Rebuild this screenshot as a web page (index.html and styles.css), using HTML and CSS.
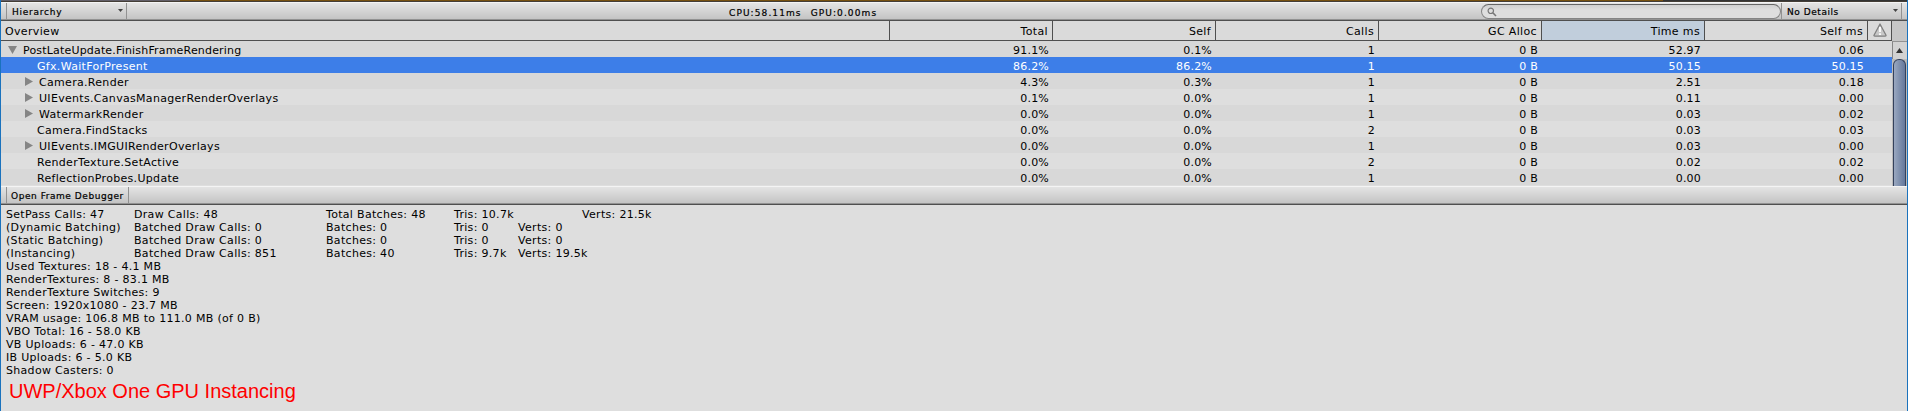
FILE: index.html
```html
<!DOCTYPE html>
<html lang="en">
<head>
  <meta charset="UTF-8" />
  <meta name="viewport" content="width=device-width, initial-scale=1" />
  <title>Profiler</title>
  <link rel="stylesheet" href="styles.css">
</head>
<body>
  <div class="top-strip"><span class="strip-a"></span><span class="strip-b"></span><span class="strip-c"></span></div>

  <!-- Toolbar -->
  <div class="toolbar">
    <div class="dropdown view-mode"><span>Hierarchy</span><i class="caret"></i></div>
    <div class="times"><span class="cpu">CPU:58.11ms</span><span class="gpu">GPU:0.00ms</span></div>
    <div class="search">
      <svg width="10" height="10" viewBox="0 0 10 10"><circle cx="3.8" cy="3.8" r="2.7" fill="none" stroke="#777" stroke-width="1.2"/><path d="M5.8 5.8L9 9" stroke="#777" stroke-width="1.6"/></svg>
    </div>
    <div class="dropdown details"><span>No Details</span><i class="caret"></i></div>
  </div>

  <!-- Call tree -->
  <div class="tree">
    <div class="table">
      <div class="row head">
        <span class="name">Overview</span><span>Total</span><span>Self</span><span>Calls</span><span>GC Alloc</span><span class="sorted">Time ms</span><span>Self ms</span>
        <span class="warn"><svg width="14" height="14" viewBox="0 0 14 14"><path d="M7 1L13 12.2Q13.2 13.2 12.2 13.2H1.8Q0.8 13.2 1 12.2Z" fill="#c8c8c8" stroke="#808080" stroke-width="1.3" stroke-linejoin="round"/><path d="M7 4V9M7 10.3V12" stroke="#fff" stroke-width="1.8"/></svg></span>
      </div>
      <div class="row"><span class="name root"><i class="open"></i>PostLateUpdate.FinishFrameRendering</span><span>91.1%</span><span>0.1%</span><span>1</span><span>0 B</span><span>52.97</span><span>0.06</span></div>
      <div class="row selected"><span class="name leaf">Gfx.WaitForPresent</span><span>86.2%</span><span>86.2%</span><span>1</span><span>0 B</span><span>50.15</span><span>50.15</span></div>
      <div class="row"><span class="name child"><i class="closed"></i>Camera.Render</span><span>4.3%</span><span>0.3%</span><span>1</span><span>0 B</span><span>2.51</span><span>0.18</span></div>
      <div class="row"><span class="name child"><i class="closed"></i>UIEvents.CanvasManagerRenderOverlays</span><span>0.1%</span><span>0.0%</span><span>1</span><span>0 B</span><span>0.11</span><span>0.00</span></div>
      <div class="row"><span class="name child"><i class="closed"></i>WatermarkRender</span><span>0.0%</span><span>0.0%</span><span>1</span><span>0 B</span><span>0.03</span><span>0.02</span></div>
      <div class="row"><span class="name leaf">Camera.FindStacks</span><span>0.0%</span><span>0.0%</span><span>2</span><span>0 B</span><span>0.03</span><span>0.03</span></div>
      <div class="row"><span class="name child"><i class="closed"></i>UIEvents.IMGUIRenderOverlays</span><span>0.0%</span><span>0.0%</span><span>1</span><span>0 B</span><span>0.03</span><span>0.00</span></div>
      <div class="row"><span class="name leaf">RenderTexture.SetActive</span><span>0.0%</span><span>0.0%</span><span>2</span><span>0 B</span><span>0.02</span><span>0.02</span></div>
      <div class="row"><span class="name leaf">ReflectionProbes.Update</span><span>0.0%</span><span>0.0%</span><span>1</span><span>0 B</span><span>0.00</span><span>0.00</span></div>
    </div>
    <div class="scroll">
      <div class="scroll-corner"></div>
      <div class="scroll-up"><i></i></div>
      <div class="thumb"></div>
    </div>
  </div>

  <div class="toolbar lower">
    <div class="button">Open Frame Debugger</div>
  </div>

  <!-- Rendering stats -->
  <div class="stats">
    <div class="stat totals"><span>SetPass Calls: 47</span><span>Draw Calls: 48</span><span>Total Batches: 48</span><span>Tris: 10.7k</span><span>Verts: 21.5k</span></div>
    <div class="stat"><span>(Dynamic Batching)</span><span>Batched Draw Calls: 0</span><span>Batches: 0</span><span>Tris: 0</span><span>Verts: 0</span></div>
    <div class="stat"><span>(Static Batching)</span><span>Batched Draw Calls: 0</span><span>Batches: 0</span><span>Tris: 0</span><span>Verts: 0</span></div>
    <div class="stat"><span>(Instancing)</span><span>Batched Draw Calls: 851</span><span>Batches: 40</span><span>Tris: 9.7k</span><span>Verts: 19.5k</span></div>
    <div>Used Textures: 18 - 4.1 MB</div>
    <div>RenderTextures: 8 - 83.1 MB</div>
    <div>RenderTexture Switches: 9</div>
    <div>Screen: 1920x1080 - 23.7 MB</div>
    <div>VRAM usage: 106.8 MB to 111.0 MB (of 0 B)</div>
    <div>VBO Total: 16 - 58.0 KB</div>
    <div>VB Uploads: 6 - 47.0 KB</div>
    <div>IB Uploads: 6 - 5.0 KB</div>
    <div>Shadow Casters: 0</div>
  </div>
  <div class="caption">UWP/Xbox One GPU Instancing</div>
</body>
</html>
```

FILE: styles.css
```css
* {
  box-sizing: border-box;
}
body {
  margin: 0;
  height: 411px;
  overflow: hidden;
  background: #dedede;
  border-left: 1px solid #1a72bd;
  border-right: 1px solid #1a72bd;
  font-family: "DejaVu Sans", Verdana, sans-serif;
  font-size: 11px;
  letter-spacing: 0.31px;
  color: #000;
}
.top-strip {
  display: flex;
  height: 2px;
  border-bottom: 1px solid #433d36;
}
.strip-a {
  width: 179px;
  background: #625f68;
}
.strip-b {
  flex: 1;
  background: #76500f;
}
.strip-c {
  width: 244px;
  background: #333;
}

/* Toolbars */
.toolbar {
  display: flex;
  height: 19px;
  padding: 0 5px;
  background: linear-gradient(#e4e4e4, #c2c2c2);
  border-top: 1px solid #f4f4f4;
  border-bottom: 1px solid #4f4f4f;
  box-shadow: inset 0 -1px #929292;
  font-size: 9px;
  line-height: 18px;
  letter-spacing: 0.55px;
  -webkit-text-stroke: 0.2px #000;
}
.dropdown {
  display: flex;
  justify-content: space-between;
  height: 16px;
  border-left: 1px solid #929292;
  border-right: 1px solid #929292;
}
.view-mode {
  width: 121px;
  padding: 0 3px 0 5px;
  letter-spacing: 0.75px;
}
.details {
  width: 121px;
  padding: 0 3px 0 5px;
}
.caret {
  margin-top: 6px;
  width: 5px;
  height: 3px;
  background: #444;
  clip-path: polygon(0 0, 100% 0, 50% 100%);
}
.times {
  flex: 1;
  display: flex;
  gap: 9px;
  padding: 1px 0 0 602px;
  letter-spacing: 1.1px;
}
.search {
  width: 300px;
  height: 15px;
  margin-top: 1px;
  padding: 2px 5px;
  background: linear-gradient(#cfcfcf, #dedede 40%);
  border: 1px solid #858585;
  border-top-color: #666;
  border-radius: 8px;
  line-height: 0;
}

/* Call tree */
.tree {
  display: flex;
  height: 165px;
}
.table {
  width: 1891px;
}
.row {
  display: grid;
  grid-template-columns: 889px repeat(6, 163px) 24px;
  grid-template-rows: 100%;
  height: 16px;
  line-height: 19px;
  background: #dedede;
  text-align: right;
  letter-spacing: 0.2px;
}
.row:nth-child(even) {
  background: #d8d8d8;
}
.row > span {
  padding-right: 4px;
  white-space: nowrap;
}
.row > .name {
  display: flex;
  text-align: left;
  letter-spacing: 0.31px;
}
.row > .root {
  letter-spacing: 0.18px;
}
.row.head {
  height: 20px;
  line-height: 21px;
  background: #dadada;
  border-bottom: 1px solid #4f4f4f;
  letter-spacing: 0.35px;
}
.head > span {
  border-right: 1px solid #4f4f4f;
}
.row.head > .name {
  padding-left: 4px;
  letter-spacing: 0.35px;
}
.head > .sorted {
  background: #c1cedc;
}
.head > .warn {
  padding: 2px 4px 0 0;
  line-height: 0;
}
.row.selected {
  background: #3d7ee8;
  color: #fff;
}
.root {
  padding-left: 7px;
}
.leaf {
  padding-left: 36px;
}
.child {
  padding-left: 24px;
}
.open {
  margin: 5px 6px 0 0;
  width: 9px;
  height: 8px;
  background: #858585;
  clip-path: polygon(0 0, 100% 0, 50% 100%);
}
.closed {
  margin: 4px 6px 0 0;
  width: 8px;
  height: 9px;
  background: #858585;
  clip-path: polygon(0 0, 100% 50%, 0 100%);
}

/* Scrollbar */
.scroll {
  width: 15px;
  background: #bbb;
}
.scroll-corner {
  height: 20px;
  background: #c6c6c6;
}
.scroll-up {
  height: 18px;
  padding: 6px 0 0 3px;
  background: #d2d2d2;
  border-left: 1px solid #858585;
  border-top: 1px solid #929292;
}
.scroll-up i {
  display: block;
  width: 7px;
  height: 5px;
  background: #333;
  clip-path: polygon(50% 0, 100% 100%, 0 100%);
}
.thumb {
  height: 127px;
  margin-left: 1px;
  width: 13px;
  background: linear-gradient(to right, #9aa8c0, #64789c);
  border: 1px solid #34415c;
  border-bottom: 0;
  border-radius: 6px 6px 0 0;
}

/* Lower toolbar */
.button {
  width: 123px;
  height: 16px;
  padding: 0 4px;
  border-left: 1px solid #929292;
  border-right: 1px solid #929292;
  white-space: nowrap;
}
.stats {
  padding: 3px 0 0 5px;
  line-height: 13px;
}
.stat {
  display: grid;
  grid-template-columns: 128px 192px 128px 64px auto;
  white-space: nowrap;
}
.totals {
  grid-template-columns: 128px 192px 128px 128px auto;
}
.caption {
  padding: 1px 0 0 8px;
  font-family: "Liberation Sans", Arial, sans-serif;
  font-size: 20px;
  line-height: 26px;
  letter-spacing: 0;
  color: #f00;
}
```
